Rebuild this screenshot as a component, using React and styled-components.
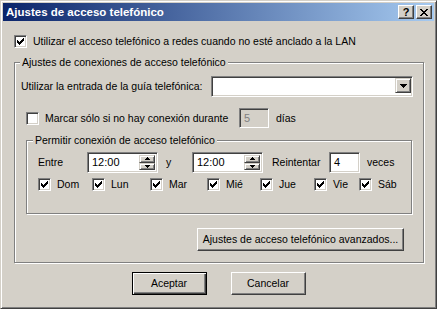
import styled, { createGlobalStyle } from "styled-components";

const GlobalStyle = createGlobalStyle`
  * { box-sizing: border-box; }
  body {
    margin: 0;
    background: #d4d0c8;
    font-family: "Liberation Sans", Arial, sans-serif;
    font-size: 10.5px;
    color: #000;
  }
`;

const days = [
  { name: "Dom", width: 54 },
  { name: "Lun", width: 58 },
  { name: "Mar", width: 57 },
  { name: "Mié", width: 53 },
  { name: "Jue", width: 54 },
  { name: "Vie", width: 45 },
  { name: "Sáb", width: 40 },
];

function CheckMark() {
  return (
    <svg width="7" height="7" viewBox="0 0 7 7" shapeRendering="crispEdges">
      <path
        fill="#000"
        d="M0 2h1v3H0z M1 3h1v3H1z M2 4h1v3H2z M3 3h1v3H3z M4 2h1v3H4z M5 1h1v3H5z M6 0h1v3H6z"
      />
    </svg>
  );
}

function CloseGlyph() {
  return (
    <svg width="8" height="7" viewBox="0 0 8 7" shapeRendering="crispEdges">
      <path
        fill="#000"
        d="M0 0h2v1H0z M6 0h2v1H6z M1 1h2v1H1z M5 1h2v1H5z M2 2h4v1H2z M3 3h2v1H3z M2 4h4v1H2z M1 5h2v1H1z M5 5h2v1H5z M0 6h2v1H0z M6 6h2v1H6z"
      />
    </svg>
  );
}

function DownArrow() {
  return (
    <svg width="7" height="4" viewBox="0 0 7 4" shapeRendering="crispEdges">
      <path fill="#000" d="M0 0h7v1H0z M1 1h5v1H1z M2 2h3v1H2z M3 3h1v1H3z" />
    </svg>
  );
}

function SpinArrow({ up }) {
  return (
    <svg width="5" height="3" viewBox="0 0 5 3" shapeRendering="crispEdges">
      <path
        fill="#000"
        d={up ? "M2 0h1v1H2z M1 1h3v1H1z M0 2h5v1H0z" : "M0 0h5v1H0z M1 1h3v1H1z M2 2h1v1H2z"}
      />
    </svg>
  );
}

function CheckBox({ checked }) {
  return <Box>{checked && <CheckMark />}</Box>;
}

function TimeBox({ value, $width }) {
  return (
    <Field $width={$width}>
      <FieldText>{value}</FieldText>
      <Spinner>
        <SpinButton><SpinArrow up /></SpinButton>
        <SpinButton><SpinArrow /></SpinButton>
      </Spinner>
    </Field>
  );
}

export default function App() {
  return (
    <>
      <GlobalStyle />
      <Window>
        <TitleBar>
          <TitleText>Ajustes de acceso telefónico</TitleText>
          <CaptionButtons>
            <CaptionButton><HelpGlyph>?</HelpGlyph></CaptionButton>
            <CaptionButton><CloseGlyph /></CaptionButton>
          </CaptionButtons>
        </TitleBar>

        <Body>
          <Row $height={13} $top={14}>
            <CheckBox checked />
            <Text $pad={6}>Utilizar el acceso telefónico a redes cuando no esté anclado a la LAN</Text>
          </Row>

          <Group $width={410} $height={201} $top={14} $left={0} $padLeft={6} $padRight={10}>
            <GroupTitle $offset={-1}>Ajustes de conexiones de acceso telefónico</GroupTitle>

            <Row $height={21} $top={7}>
              <Text>Utilizar la entrada de la guía telefónica:</Text>
              <Combo>
                <DropButton><DownArrow /></DropButton>
              </Combo>
            </Row>

            <Row $height={20} $top={11} $left={5}>
              <CheckBox />
              <Text $pad={6} $width={200}>Marcar sólo si no hay conexión durante</Text>
              <Field $width={30} $disabled>
                <FieldText>5</FieldText>
              </Field>
              <Text $pad={7}>días</Text>
            </Row>

            <Group $width={386} $height={74} $top={12} $left={5} $padLeft={11} $padRight={0}>
              <GroupTitle $offset={-5}>Permitir conexión de acceso telefónico</GroupTitle>

              <Row $height={21} $top={5}>
                <Text $width={49}>Entre</Text>
                <TimeBox value="12:00" $width={71} />
                <Text $width={34} $pad={8}>y</Text>
                <TimeBox value="12:00" $width={71} />
                <Text $width={66} $pad={9}>Reintentar</Text>
                <Field $width={31}>
                  <FieldText>4</FieldText>
                </Field>
                <Text $pad={7}>veces</Text>
              </Row>

              <Row $height={13} $top={5}>
                {days.map((d) => (
                  <DayItem key={d.name} $width={d.width}>
                    <CheckBox checked />
                    <Text $pad={6}>{d.name}</Text>
                  </DayItem>
                ))}
              </Row>
            </Group>

            <PushButton $width={207} $top={14} $alignEnd>
              Ajustes de acceso telefónico avanzados...
            </PushButton>
          </Group>

          <ButtonRow>
            <PushButton $width={75} $default>Aceptar</PushButton>
            <PushButton $width={75}>Cancelar</PushButton>
          </ButtonRow>
        </Body>
      </Window>
    </>
  );
}

const Window = styled.div`
  width: 437px;
  height: 309px;
  background: #d4d0c8;
  border: 1px solid;
  border-color: #d4d0c8 #404040 #404040 #d4d0c8;
  box-shadow: inset 1px 1px #ffffff, inset -1px -1px #808080;
  padding: 2px;
  display: flex;
  flex-direction: column;
`;

const TitleBar = styled.div`
  height: 18px;
  flex: none;
  display: flex;
  align-items: center;
  justify-content: space-between;
  padding: 0 2px 0 3px;
  background: linear-gradient(to right, #0a246a, #a6caf0);
`;

const TitleText = styled.span`
  color: #fff;
  font-weight: bold;
  font-size: 11.5px;
  line-height: 14px;
`;

const CaptionButtons = styled.div`
  display: flex;
  gap: 2px;
`;

const CaptionButton = styled.div`
  width: 16px;
  height: 14px;
  background: #d4d0c8;
  border: 1px solid;
  border-color: #ffffff #404040 #404040 #ffffff;
  box-shadow: inset -1px -1px #808080;
  display: flex;
  align-items: center;
  justify-content: center;
`;

const HelpGlyph = styled.span`
  font-weight: bold;
  font-size: 11px;
  line-height: 11px;
  margin-top: 1px;
`;

const Body = styled.div`
  flex: 1;
  display: flex;
  flex-direction: column;
  padding: 0 11px;
`;

const Row = styled.div`
  display: flex;
  align-items: center;
  height: ${(p) => p.$height}px;
  margin-top: ${(p) => p.$top || 0}px;
  margin-left: ${(p) => p.$left || 0}px;
  flex: none;
`;

const Text = styled.span`
  line-height: 13px;
  white-space: nowrap;
  padding-left: ${(p) => p.$pad || 0}px;
  width: ${(p) => (p.$width ? `${p.$width}px` : "auto")};
  flex: none;
`;

const Box = styled.div`
  width: 13px;
  height: 13px;
  flex: none;
  background: #fff;
  border: 1px solid;
  border-color: #808080 #ffffff #ffffff #808080;
  box-shadow: inset 1px 1px #404040, inset -1px -1px #d4d0c8;
  display: flex;
  align-items: center;
  justify-content: center;
`;

const Group = styled.div`
  width: ${(p) => p.$width}px;
  height: ${(p) => p.$height}px;
  margin-top: ${(p) => p.$top}px;
  margin-left: ${(p) => p.$left}px;
  flex: none;
  border: 1px solid #808080;
  box-shadow: inset 1px 1px #ffffff, 1px 1px #ffffff;
  padding: 0 ${(p) => p.$padRight}px 0 ${(p) => p.$padLeft}px;
  display: flex;
  flex-direction: column;
`;

const GroupTitle = styled.span`
  align-self: flex-start;
  margin-top: -7px;
  margin-left: ${(p) => p.$offset}px;
  padding: 0 2px;
  height: 13px;
  line-height: 13px;
  background: #d4d0c8;
  white-space: nowrap;
`;

const Combo = styled.div`
  margin-left: auto;
  width: 202px;
  height: 21px;
  background: #fff;
  border: 1px solid;
  border-color: #808080 #ffffff #ffffff #808080;
  box-shadow: inset 1px 1px #404040, inset -1px -1px #d4d0c8;
  padding: 2px;
  display: flex;
  justify-content: flex-end;
`;

const DropButton = styled.div`
  width: 16px;
  height: 15px;
  margin: -1px -1px 0 0;
  background: #d4d0c8;
  border: 1px solid;
  border-color: #d4d0c8 #404040 #404040 #d4d0c8;
  box-shadow: inset 1px 1px #ffffff, inset -1px -1px #808080;
  display: flex;
  align-items: center;
  justify-content: center;
`;

const Field = styled.div`
  width: ${(p) => p.$width}px;
  height: 100%;
  flex: none;
  background: ${(p) => (p.$disabled ? "#d4d0c8" : "#ffffff")};
  color: ${(p) => (p.$disabled ? "#808080" : "#000")};
  border: 1px solid;
  border-color: #808080 #ffffff #ffffff #808080;
  box-shadow: inset 1px 1px #404040, inset -1px -1px #d4d0c8;
  padding: 1px 1px 1px 4px;
  display: flex;
  align-items: center;
`;

const FieldText = styled.span`
  flex: 1;
  line-height: 13px;
  font-size: 11px;
`;

const Spinner = styled.div`
  width: 16px;
  align-self: stretch;
  margin: 1px 1px 1px 0;
  display: flex;
  flex-direction: column;
`;

const SpinButton = styled.div`
  flex: 1;
  background: #d4d0c8;
  border: 1px solid;
  border-color: #d4d0c8 #404040 #404040 #d4d0c8;
  box-shadow: inset 1px 1px #ffffff, inset -1px -1px #808080;
  display: flex;
  align-items: center;
  justify-content: center;
`;

const DayItem = styled.div`
  display: flex;
  align-items: center;
  width: ${(p) => p.$width}px;
  flex: none;
`;

const PushButton = styled.div`
  width: ${(p) => p.$width}px;
  height: 23px;
  flex: none;
  margin-top: ${(p) => p.$top || 0}px;
  align-self: ${(p) => (p.$alignEnd ? "flex-end" : "auto")};
  margin-right: ${(p) => (p.$alignEnd ? 9 : 0)}px;
  background: #d4d0c8;
  border: 1px solid;
  border-color: ${(p) => (p.$default ? "#000" : "#ffffff #404040 #404040 #ffffff")};
  box-shadow: ${(p) =>
    p.$default
      ? "inset 1px 1px #ffffff, inset -1px -1px #404040, inset -2px -2px #808080"
      : "inset -1px -1px #808080"};
  display: flex;
  align-items: center;
  justify-content: center;
  line-height: 13px;
  white-space: nowrap;
`;

const ButtonRow = styled.div`
  display: flex;
  justify-content: center;
  gap: 24px;
  margin-top: 9px;
`;
